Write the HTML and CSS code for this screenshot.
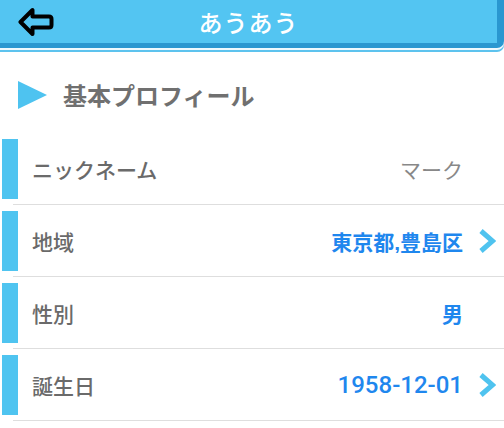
FILE: index.html
```html
<!DOCTYPE html>
<html lang="ja">
<head>
  <meta charset="UTF-8">
  <title>あうあう</title>
  <link rel="stylesheet" href="styles.css">
</head>
<body>
  <header class="topbar">
    <a class="back" href="#">
      <svg width="36" height="30" viewBox="0 0 36 30">
        <path d="M2.5 15 L14.5 3 L14.5 9.5 L31 9.5 Q33.5 9.5 33.5 12 L33.5 18 Q33.5 20.5 31 20.5 L14.5 20.5 L14.5 27 Z"
              fill="none" stroke="#000" stroke-width="4" stroke-linejoin="round"/>
      </svg>
    </a>
    <h1>あうあう</h1>
  </header>

  <div class="section-head">
    <span class="tri"></span>
    <h2>基本プロフィール</h2>
  </div>

  <ul class="profile">
    <li class="item">
      <span class="bar"></span>
      <span class="label">ニックネーム</span>
      <span class="value plain">マーク</span>
      <span class="chev"></span>
    </li>
    <li class="item">
      <span class="bar"></span>
      <span class="label">地域</span>
      <span class="value">東京都,豊島区</span>
      <span class="chev">
        <svg width="18" height="24" viewBox="0 0 18 24"><path d="M3 2 L14.5 12 L3 22" fill="none" stroke="#4fc3ef" stroke-width="5"/></svg>
      </span>
    </li>
    <li class="item">
      <span class="bar"></span>
      <span class="label">性別</span>
      <span class="value">男</span>
      <span class="chev"></span>
    </li>
    <li class="item">
      <span class="bar"></span>
      <span class="label">誕生日</span>
      <span class="value date">1958-12-01</span>
      <span class="chev">
        <svg width="18" height="24" viewBox="0 0 18 24"><path d="M3 2 L14.5 12 L3 22" fill="none" stroke="#4fc3ef" stroke-width="5"/></svg>
      </span>
    </li>
  </ul>
</body>
</html>
```

FILE: styles.css
```css
body {
  margin: 0;
  background: #fff;
  font-family: "Noto Sans CJK JP", "Noto Sans", sans-serif;
}
.topbar {
  display: flex;
  align-items: center;
  height: 43px;
  background: #53c5f2;
  border-right: 7px solid #2a97d0;
  border-bottom: 5px solid #2a97d0;
  border-bottom-right-radius: 7px;
  box-shadow: 0 2px 0 #eef9fe, 0 4px 0 #5dc3ee;
}
.back {
  display: flex;
  margin-left: 18px;
}
.topbar h1 {
  flex: 1;
  margin: 0 54px 0 0;
  text-align: center;
  color: #fff;
  font-size: 24px;
  font-weight: 500;
  letter-spacing: 1px;
}
.section-head {
  display: flex;
  align-items: center;
  height: 91px;
  padding: 2px 0 0 18px;
  box-sizing: border-box;
}
.tri {
  width: 0;
  height: 0;
  border-top: 14px solid transparent;
  border-bottom: 14px solid transparent;
  border-left: 29px solid #4ec3f0;
  margin-right: 16px;
}
.section-head h2 {
  margin: 0;
  font-size: 24px;
  font-weight: bold;
  color: #707070;
}
.profile {
  list-style: none;
  margin: 0;
  padding: 0;
}
.item {
  display: flex;
  align-items: center;
  height: 60px;
  margin: 0 0 6px 13px;
  padding: 0 8px 5px 0;
  border-bottom: 1px solid #dedede;
}
.bar {
  align-self: stretch;
  width: 16px;
  margin-left: -11px;
  background: #4fc4f0;
}
.label {
  flex: 1;
  padding-left: 14px;
  font-size: 21px;
  font-weight: 500;
  color: #6a6a6a;
}
.value {
  font-family: "Liberation Sans", "Noto Sans CJK JP", sans-serif;
  font-size: 21px;
  font-weight: bold;
  color: #1f87ee;
}
.value.plain {
  font-weight: normal;
  color: #888;
}
.value.date {
  font-family: Roboto, "Liberation Sans", sans-serif;
  font-size: 24px;
  font-weight: 500;
}
.chev {
  display: flex;
  width: 18px;
  margin-left: 15px;
}
```
